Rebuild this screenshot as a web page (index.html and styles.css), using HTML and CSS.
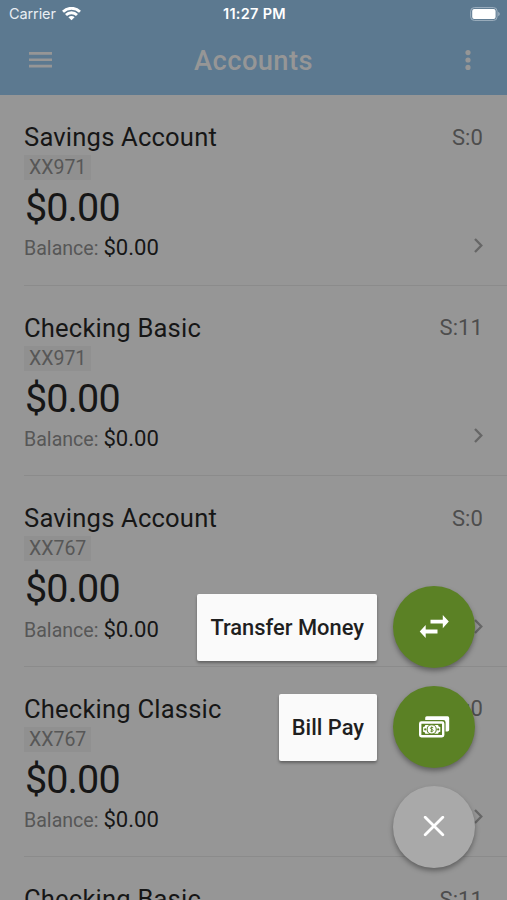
FILE: index.html
```
<!DOCTYPE html>
<html lang="en">
<head>
    <meta charset="UTF-8">
    <meta name="viewport" content="width=device-width, initial-scale=1.0">
    <title>Accounts</title>
    <link rel="stylesheet" href="styles.css">
</head>
<body>
    <div class="screen">
        <header class="header">
            <div class="status-bar">
                <div class="carrier">
                    <span>Carrier</span>
                    <svg width="19" height="14" viewBox="0 0 19 14" fill="none" stroke="#fff" stroke-width="2.8">
                        <path d="M1 4.7a12.2 12.2 0 0 1 17 0"/>
                        <path d="M4 8a7.8 7.8 0 0 1 11 0"/>
                        <path d="M9.5 13.3L6.4 10.2a4.4 4.4 0 0 1 6.2 0z" fill="#fff" stroke="none"/>
                    </svg>
                </div>
                <span class="time">11:27 PM</span>
                <svg class="battery" width="30" height="14" viewBox="0 0 30 14">
                    <rect x="0.7" y="0.6" width="26.4" height="12.8" rx="3.6" fill="none" stroke="#9fb1c0" stroke-width="1"/>
                    <rect x="2.2" y="2.1" width="23.4" height="9.8" rx="2" fill="#fff"/>
                    <path d="M28.2 4.8q1.6.8 1.6 2.2t-1.6 2.2z" fill="#9fb1c0"/>
                </svg>
            </div>
            <div class="toolbar">
                <svg width="23" height="16" viewBox="0 0 23 16" fill="#969696">
                    <path d="M0 0h23v2.7H0zM0 6.4h23v2.7H0zM0 12.7h23v2.7H0z"/>
                </svg>
                <h1>Accounts</h1>
                <svg class="more" width="6" height="20" viewBox="0 0 6 20" fill="#969696">
                    <circle cx="3" cy="2.6" r="2.6"/>
                    <circle cx="3" cy="10" r="2.6"/>
                    <circle cx="3" cy="17.4" r="2.6"/>
                </svg>
            </div>
        </header>

        <main class="account-list">
            <section class="account">
                <div class="account-top"><h2>Savings Account</h2><span class="status">S:0</span></div>
                <span class="number">XX971</span>
                <div class="amount">$0.00</div>
                <div class="balance">Balance: <b>$0.00</b></div>
                <svg class="chevron" width="9" height="15" viewBox="0 0 9 15"><path d="M1 1l6.3 6.5L1 14"/></svg>
            </section>
            <section class="account">
                <div class="account-top"><h2>Checking Basic</h2><span class="status">S:11</span></div>
                <span class="number">XX971</span>
                <div class="amount">$0.00</div>
                <div class="balance">Balance: <b>$0.00</b></div>
                <svg class="chevron" width="9" height="15" viewBox="0 0 9 15"><path d="M1 1l6.3 6.5L1 14"/></svg>
            </section>
            <section class="account">
                <div class="account-top"><h2>Savings Account</h2><span class="status">S:0</span></div>
                <span class="number">XX767</span>
                <div class="amount">$0.00</div>
                <div class="balance">Balance: <b>$0.00</b></div>
                <svg class="chevron" width="9" height="15" viewBox="0 0 9 15"><path d="M1 1l6.3 6.5L1 14"/></svg>
            </section>
            <section class="account">
                <div class="account-top"><h2>Checking Classic</h2><span class="status">S:0</span></div>
                <span class="number">XX767</span>
                <div class="amount">$0.00</div>
                <div class="balance">Balance: <b>$0.00</b></div>
                <svg class="chevron" width="9" height="15" viewBox="0 0 9 15"><path d="M1 1l6.3 6.5L1 14"/></svg>
            </section>
            <section class="account">
                <div class="account-top"><h2>Checking Basic</h2><span class="status">S:11</span></div>
            </section>
        </main>

        <div class="fab-menu">
            <div class="fab-item">
                <span class="fab-label">Transfer Money</span>
                <button class="fab" aria-label="Transfer Money">
                    <svg width="30" height="24" viewBox="0 0 30 24" fill="#fff">
                        <path d="M11.5 4.7h12.3V0L29.8 6.6l-6 6.6V8.5H11.5z"/>
                        <path d="M18.5 14.6H6.7V9.9L.7 16.5l6 6.6v-4.7h11.8z"/>
                    </svg>
                </button>
            </div>
            <div class="fab-item">
                <span class="fab-label">Bill Pay</span>
                <button class="fab" aria-label="Bill Pay">
                    <svg width="31" height="22" viewBox="0 0 31 22">
                        <path d="M6.2 4V1.8Q6.2.3 7.8.3h20.8q1.6 0 1.6 1.6v11.8q0 1.8-1.8 1.8h-1.8V6.4Q26.6 4 24.2 4z" fill="#fff"/>
                        <rect x="1.2" y="6.5" width="23" height="13.8" rx="1.2" fill="none" stroke="#fff" stroke-width="2.4"/>
                        <path d="M6.3 9.1h12.8q0 2 2.2 2v4.6q-2.2 0-2.2 2H6.3q0-2-2.2-2v-4.6q2.2 0 2.2-2z" fill="#fff"/>
                        <circle cx="12.7" cy="13.4" r="4.6" fill="#fff" stroke="#5b8125" stroke-width="1.1"/>
                        <circle cx="6.2" cy="13.4" r="1.1" fill="#5b8125"/>
                        <circle cx="19.2" cy="13.4" r="1.1" fill="#5b8125"/>
                        <path d="M14.2 11.7q-2.8-1-2.8.5c0 1.4 2.8.9 2.8 2.3 0 1.5-2.9.6-2.9.6M12.7 10.5v5.8" fill="none" stroke="#5b8125" stroke-width=".9"/>
                    </svg>
                </button>
            </div>
            <div class="fab-item">
                <button class="fab fab-close" aria-label="Close">
                    <svg width="22" height="22" viewBox="0 0 22 22" stroke="#fff" stroke-width="2.8" stroke-linecap="round">
                        <path d="M2.2 1.2l17.6 17.6M19.8 1.2L2.2 18.8"/>
                    </svg>
                </button>
            </div>
        </div>
    </div>
</body>
</html>
```
FILE: styles.css
```
body {
    margin: 0;
    font-family: Roboto, "Liberation Sans", sans-serif;
    background: #969696;
}

.screen {
    position: relative;
    height: 900px;
    overflow: hidden;
}

h1, h2 {
    margin: 0;
}

.header {
    height: 95px;
    background: #5c7990;
}

.status-bar {
    display: grid;
    grid-template-columns: 1fr auto 1fr;
    align-items: center;
    height: 27px;
    padding: 0 7px 0 9px;
    font-family: Inter, sans-serif;
    font-size: 14.5px;
    color: #fff;
}

.carrier {
    display: flex;
    align-items: center;
    gap: 6px;
    color: #e9eef3;
    letter-spacing: -0.1px;
}

.time {
    font-weight: 600;
    letter-spacing: 0.3px;
}

.battery {
    justify-self: end;
}

.toolbar {
    display: grid;
    grid-template-columns: 1fr auto 1fr;
    align-items: center;
    height: 66px;
    padding: 0 36px 0 36px;
}

.toolbar > svg:first-child {
    margin-left: -7px;
}

.more {
    justify-self: end;
}

.toolbar h1 {
    font-size: 27.3px;
    font-weight: 500;
    letter-spacing: 0.4px;
    color: #969696;
    padding-top: 2px;
}

.account {
    position: relative;
    box-sizing: border-box;
    height: 190.6px;
    margin-left: 24px;
    padding: 25px 24px 0 0;
    border-bottom: 1px solid #8b8b8b;
    color: #161616;
}

.account-top {
    display: flex;
    justify-content: space-between;
    align-items: center;
    height: 34px;
}

.account h2 {
    font-size: 25.6px;
    font-weight: 400;
    letter-spacing: 0.18px;
}

.status {
    font-size: 22px;
    letter-spacing: 0.1px;
    color: #4d4d4d;
}

.number {
    display: block;
    width: 67px;
    height: 25px;
    box-sizing: border-box;
    margin-top: 1px;
    padding-left: 5px;
    background: #909090;
    font-size: 19.5px;
    line-height: 25px;
    color: #575757;
}

.amount {
    height: 54px;
    padding-left: 1px;
    font-size: 39.5px;
    line-height: 55px;
    letter-spacing: -0.9px;
}

.balance {
    padding-top: 0.4px;
    font-size: 19.6px;
    line-height: 27px;
    color: #575757;
}

.balance b {
    font-size: 22.1px;
    font-weight: 400;
    color: #161616;
}

.chevron {
    position: absolute;
    right: 24px;
    bottom: 32px;
    fill: none;
    stroke: #666;
    stroke-width: 2.3;
}

.fab-menu {
    position: absolute;
    right: 32px;
    bottom: 32px;
    display: flex;
    flex-direction: column;
    gap: 18px;
}

.fab-item {
    display: flex;
    justify-content: flex-end;
    align-items: center;
    gap: 16px;
}

.fab-label {
    height: 67px;
    padding: 0 13px;
    border-radius: 2px;
    background: #fafafa;
    box-shadow: 0 2px 3px rgba(0,0,0,0.35);
    font-size: 21.9px;
    font-weight: 500;
    line-height: 68px;
    color: #1f1f1f;
}

.fab {
    display: flex;
    align-items: center;
    justify-content: center;
    width: 82px;
    height: 82px;
    padding: 0;
    border: none;
    border-radius: 50%;
    background: #5b8125;
    box-shadow: 0 3px 5px rgba(0,0,0,0.35);
}

.fab-close {
    background: #a9a9a9;
}
```
